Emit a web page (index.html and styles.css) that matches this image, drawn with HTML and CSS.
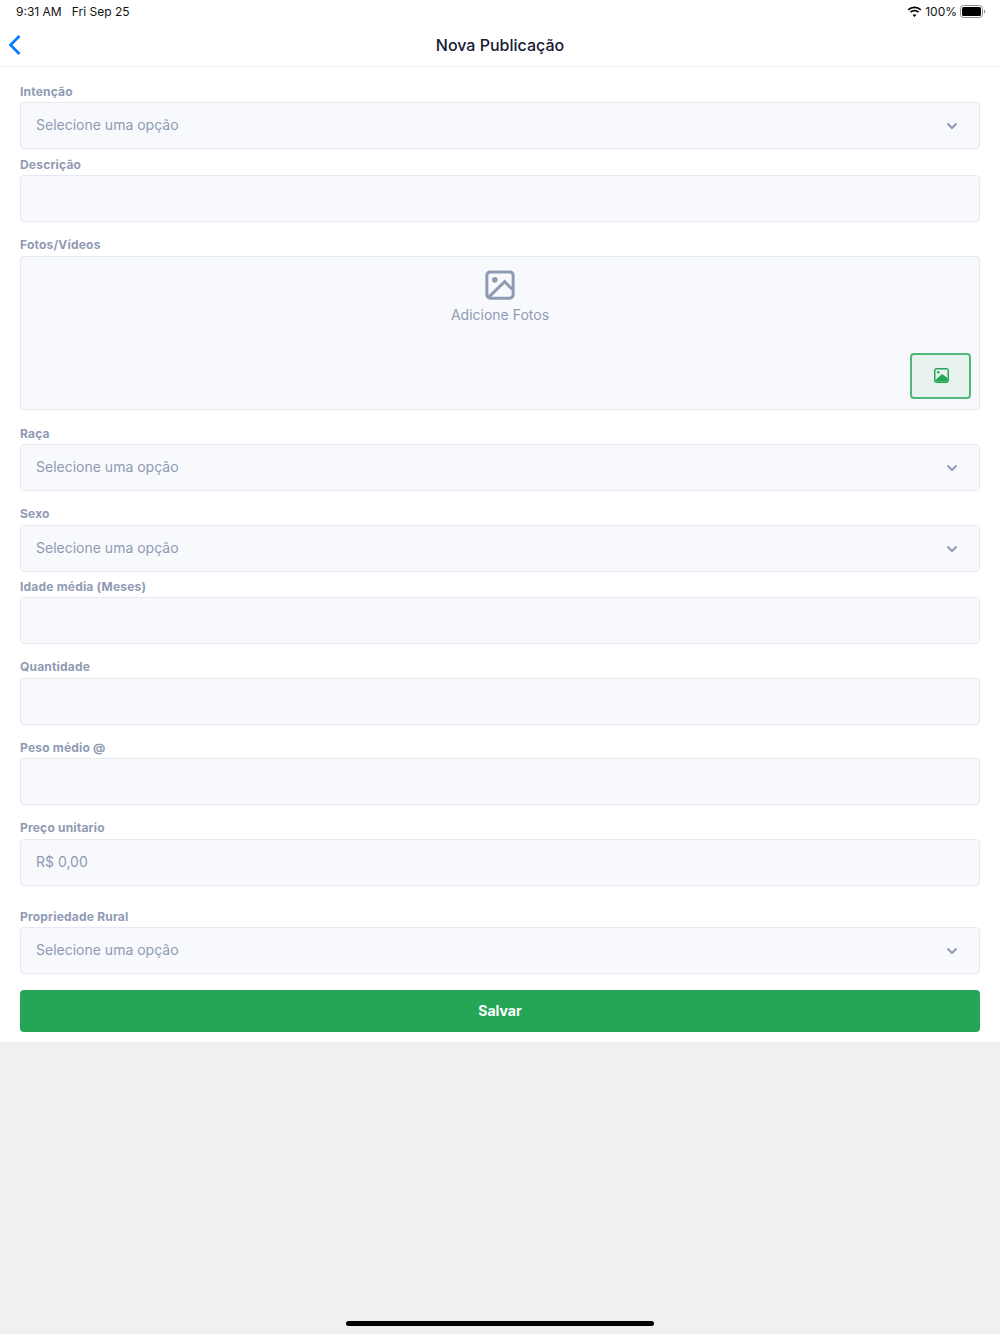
FILE: index.html
```html
<!DOCTYPE html>
<html lang="pt-BR">
<head>
    <meta charset="UTF-8">
    <meta name="viewport" content="width=device-width, initial-scale=1.0">
    <title>Nova Publicação</title>
    <link rel="stylesheet" href="styles.css">
</head>
<body>
    <div class="sheet">
        <div class="status-bar">
            <div class="status-time">9:31 AM&nbsp;&nbsp; Fri Sep 25</div>
            <div class="status-right">
                <svg class="wifi" width="15" height="12" viewBox="0 0 15 12">
                    <path d="M7.5 2.2c2.2 0 4.2.9 5.7 2.3l1.2-1.3A10 10 0 0 0 7.5.4 10 10 0 0 0 .6 3.2l1.2 1.3a8.2 8.2 0 0 1 5.7-2.3z" fill="#000"/>
                    <path d="M7.5 5.5c1.3 0 2.5.5 3.4 1.3l1.2-1.3a6.8 6.8 0 0 0-9.2 0l1.2 1.3c.9-.8 2.1-1.3 3.4-1.3z" fill="#000"/>
                    <path d="M7.5 8.2c-.8 0-1.4.3-1.9.7l1.9 2.1 1.9-2.1c-.5-.4-1.1-.7-1.9-.7z" fill="#000"/>
                </svg>
                <span>100%</span>
                <svg class="battery" width="26" height="13" viewBox="0 0 26 13">
                    <rect x="0.5" y="0.5" width="22" height="12" rx="3" fill="none" stroke="#8e8e8e"/>
                    <rect x="2" y="2" width="19" height="9" rx="1.6" fill="#000"/>
                    <path d="M24 4.5c.8.2 1.2 1 1.2 2s-.4 1.800-1.200 2z" fill="#8e8e8e"/>
                </svg>
            </div>
        </div>

        <header class="nav-bar">
            <svg class="back-icon" width="14" height="22" viewBox="0 0 14 22">
                <path d="M11.500 2 L2.500 11 L11.500 20" fill="none" stroke="#007aff" stroke-width="2.600"/>
            </svg>
            <h1>Nova Publicação</h1>
        </header>

        <form class="form">
            <div class="field">
                <label>Intenção</label>
                <div class="input">Selecione uma opção
                    <svg class="chevron" width="12" height="8" viewBox="0 0 12 8"><path d="M1.500 1.500 L6 6 L10.500 1.500" fill="none" stroke="#8f9bb3" stroke-width="2"/></svg>
                </div>
            </div>
            <div class="field">
                <label>Descrição</label>
                <div class="input"></div>
            </div>
            <div class="field spaced">
                <label class="high">Fotos/Vídeos</label>
                <div class="photos">
                    <svg class="photos-icon" width="30" height="30" viewBox="0 0 32 32">
                        <rect x="2" y="2" width="28" height="28" rx="3.500" fill="none" stroke="#8f9bb3" stroke-width="3.200"/>
                        <circle cx="10.500" cy="10.500" r="3" fill="#8f9bb3"/>
                        <path d="M4 29 L21 12.500 L29 20.500" fill="none" stroke="#8f9bb3" stroke-width="3.200"/>
                    </svg>
                    <div class="photos-text">Adicione Fotos</div>
                    <button type="button" class="photo-btn">
                        <svg width="15" height="15" viewBox="0 0 15 15">
                            <rect width="15" height="15" rx="3" fill="#25a556"/>
                            <rect x="1.500" y="1.500" width="12" height="12" rx="1" fill="#e8f2ee"/>
                            <circle cx="4.300" cy="4.300" r="1.300" fill="#25a556"/>
                            <path d="M1.500 12 L8 6 L13.500 10 V13.500 H1.500z" fill="#25a556"/>
                        </svg>
                    </button>
                </div>
            </div>
            <div class="field spaced">
                <label>Raça</label>
                <div class="input">Selecione uma opção
                    <svg class="chevron" width="12" height="8" viewBox="0 0 12 8"><path d="M1.500 1.500 L6 6 L10.500 1.500" fill="none" stroke="#8f9bb3" stroke-width="2"/></svg>
                </div>
            </div>
            <div class="field spaced">
                <label class="high">Sexo</label>
                <div class="input">Selecione uma opção
                    <svg class="chevron" width="12" height="8" viewBox="0 0 12 8"><path d="M1.500 1.500 L6 6 L10.500 1.500" fill="none" stroke="#8f9bb3" stroke-width="2"/></svg>
                </div>
            </div>
            <div class="field snug">
                <label>Idade média (Meses)</label>
                <div class="input"></div>
            </div>
            <div class="field spaced">
                <label class="high">Quantidade</label>
                <div class="input"></div>
            </div>
            <div class="field spaced-less">
                <label>Peso médio @</label>
                <div class="input"></div>
            </div>
            <div class="field spaced">
                <label class="high">Preço unitario</label>
                <div class="input">R$ 0,00</div>
            </div>
            <div class="field spaced-price">
                <label>Propriedade Rural</label>
                <div class="input">Selecione uma opção
                    <svg class="chevron" width="12" height="8" viewBox="0 0 12 8"><path d="M1.500 1.500 L6 6 L10.500 1.500" fill="none" stroke="#8f9bb3" stroke-width="2"/></svg>
                </div>
            </div>
            <button type="button" class="save-btn">Salvar</button>
        </form>
    </div>

    <div class="home-bar"></div>
</body>
</html>
```

FILE: styles.css
```css
html, body { height: 100%; }
body { margin: 0; background: #f0f0f0; font-family: Inter, "Liberation Sans", sans-serif; color: #8f9bb3; overflow: hidden; }
.sheet { background: #fff; height: 1042px; }

.status-bar { height: 23px; display: flex; justify-content: space-between; align-items: center; padding: 0 14px 0 16px; font-size: 12px; color: #111; }
.status-right { display: flex; align-items: center; gap: 3px; }

.nav-bar { height: 43px; display: flex; align-items: center; justify-content: center; border-bottom: 1px solid #eff0f2; position: relative; }
.nav-bar h1 { margin: 0; font-size: 16px; font-weight: 500; color: #151a30; }
.back-icon { position: absolute; left: 8px; top: 11px; }

.form { padding: 15px 20px 0; }
.field { margin-bottom: 6px; }
.field label { display: block; height: 20px; line-height: 19px; font-size: 12px; font-weight: 700; letter-spacing: .2px; }
.field label.high { line-height: 17px; }
.spaced { margin-top: 14px; }
.spaced-less { margin-top: 13px; }
.spaced-price { margin-top: 21px; }
.snug { margin-top: -1px; }

.input { height: 47px; box-sizing: border-box; display: flex; align-items: center; justify-content: space-between; padding: 0 21px 2px 15px; background: #f7f9fc; border: 1px solid #e4e9f2; border-radius: 4px; font-size: 14px; }
.chevron { margin-top: 2px; }

.photos { height: 154px; box-sizing: border-box; position: relative; background: #f7f9fc; border: 1px solid #e4e9f2; border-radius: 4px; text-align: center; padding-top: 13px; font-size: 14px; }
.photos-icon { display: block; margin: 0 auto 6px; }
.photo-btn { position: absolute; right: 8px; bottom: 10px; width: 61px; height: 46px; padding: 0 0 1px 2px; display: flex; align-items: center; justify-content: center; background: #e8f2ee; border: 2px solid #4fb878; border-radius: 4px; }

.save-btn { display: block; width: 100%; height: 42px; margin-top: 16px; padding: 0 0 2px; background: #25a556; border: none; border-radius: 4px; color: #fff; font-family: inherit; font-size: 14px; font-weight: 700; }

.home-bar { position: absolute; left: 346px; top: 1321px; width: 308px; height: 5px; border-radius: 3px; background: #000; }
```
